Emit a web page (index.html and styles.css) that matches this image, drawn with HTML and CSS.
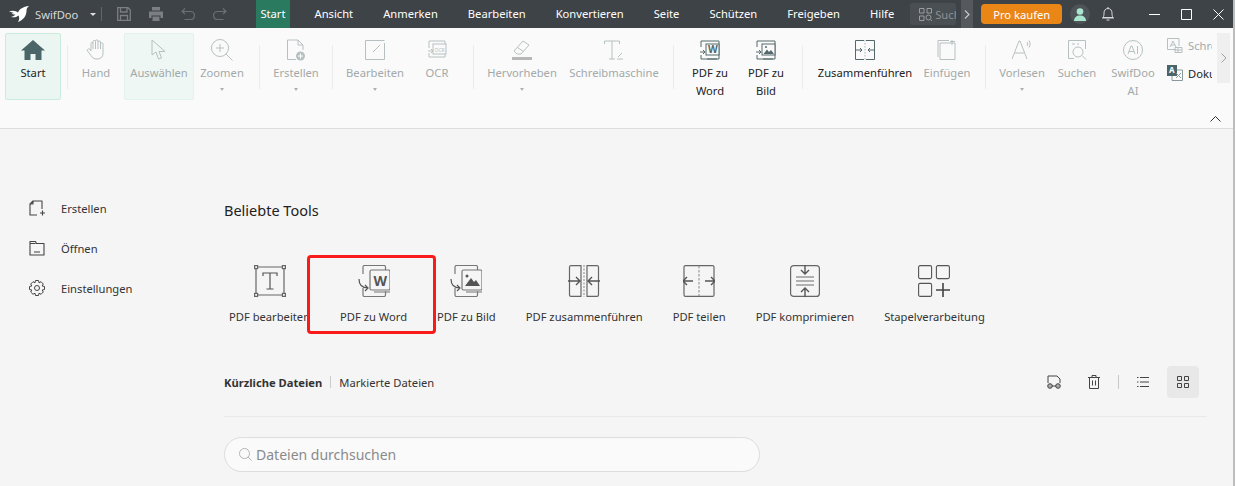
FILE: index.html
```html
<!DOCTYPE html>
<html lang="de">
<head>
    <meta charset="UTF-8">
    <title>SwifDoo PDF</title>
    <link rel="stylesheet" href="styles.css">
</head>
<body>
<div id="app">
    <div id="titlebar">
        <div class="logo">
            <svg width="22" height="16" viewBox="0 0 22 16"><path d="M0 5.500C4 4 7 5 9 6.500C10.500 3 14 .8 20 0C18 1.500 17.500 3 17.500 5C17.500 10 14 14 9 16C10.500 13.500 10.500 11 9.500 9.500C7 11.500 5 11.500 2 11C4 10.500 5.500 9.500 6.500 8.500C4.500 8.500 3 8 2.500 7.500L5 7C3.500 6.500 2 6 0 5.500Z" fill="#fff"/></svg>
            <span>SwifDoo</span>
        </div>
        <span class="caret-white"></span>
        <span class="title-sep"></span>
        <div class="quick">
            <svg width="14" height="14" viewBox="0 0 14 14" fill="none" stroke="#7b7f82" stroke-width="1.300"><path d="M.7.7H11L13.300 3V13.300H.7Z"/><path d="M3.500.7V5H10V.7M3.500 13.300V8.500H10.500V13.300"/></svg>
            <svg width="14" height="14" viewBox="0 0 14 14" fill="#7b7f82"><path d="M3 0H11V3.500H3ZM0 4.500H14V11H11.500V8.500H2.500V11H0ZM3.500 9.500H10.500V14H3.500Z"/></svg>
            <svg width="14" height="12" viewBox="0 0 14 12" fill="none" stroke="#6c7073" stroke-width="1.200"><path d="M4 .5 1 3.500 4 6M1 3.500H9.500C12 3.500 13.400 5.200 13.400 7.500S12 11.500 9.500 11.500H3.500"/></svg>
            <svg width="14" height="12" viewBox="0 0 14 12" fill="none" stroke="#6c7073" stroke-width="1.200"><path d="M10 .5 13 3.500 10 6M13 3.500H4.500C2 3.500 .6 5.200 .6 7.500S2 11.500 4.500 11.500H10.500"/></svg>
        </div>
        <div class="tabs">
            <span class="tab tab-on">Start</span>
            <span class="tab">Ansicht</span>
            <span class="tab">Anmerken</span>
            <span class="tab">Bearbeiten</span>
            <span class="tab">Konvertieren</span>
            <span class="tab">Seite</span>
            <span class="tab">Schützen</span>
            <span class="tab">Freigeben</span>
            <span class="tab">Hilfe</span>
        </div>
        <div class="title-search">
            <svg width="13" height="13" viewBox="0 0 13 13" fill="none" stroke="#9a9d9f" stroke-width="1"><path d="M.5.5H5V5H.5ZM8 .5H12.500V5H8ZM.5 8H5V12.500H.5Z"/><circle cx="9.500" cy="9.500" r="2.500"/><path d="M11.500 11.500 13 13"/></svg>
            <span>Suche</span>
        </div>
        <div class="title-more"><svg width="6" height="9" viewBox="0 0 6 9" fill="none" stroke="#c5c7c9" stroke-width="1.200"><path d="M1 .5 5 4.500 1 8.500"/></svg></div>
        <button class="buy">Pro kaufen</button>
        <div class="avatar"><svg width="12" height="13" viewBox="0 0 12 13" fill="#a8e6cf"><circle cx="6" cy="3.500" r="3.300"/><path d="M0 13C0 9.500 2.500 7.500 6 7.500S12 9.500 12 13Z"/></svg></div>
        <svg class="bell" width="12" height="14" viewBox="0 0 12 14" fill="none" stroke="#d8d9da" stroke-width="1"><path d="M1 10.500C2 9 2 7.500 2 6C2 3.500 3.500 1.500 6 1.500S10 3.500 10 6C10 7.500 10 9 11 10.500ZM0 11H12M4.500 13H7.500M6 0V1.500"/></svg>
        <div class="win">
            <svg width="11" height="11" viewBox="0 0 11 11" stroke="#fff" stroke-width="1"><path d="M0 5.500H11"/></svg>
            <svg width="11" height="11" viewBox="0 0 11 11" fill="none" stroke="#fff" stroke-width="1"><path d="M.5.500H10.500V10.500H.5Z"/></svg>
            <svg width="11" height="11" viewBox="0 0 11 11" stroke="#fff" stroke-width="1"><path d="M.5.500 10.500 10.500M10.500.5 .5 10.500"/></svg>
        </div>
    </div>

    <div id="ribbon">
        <div class="rb rb-start">
            <svg width="24" height="22" viewBox="0 0 24 22" fill="#4b6669"><path d="M12 1 24 11.500H20.500V21H14.500V15H9.500V21H3.500V11.500H0Z"/></svg>
            <span class="rb-on">Start</span>
        </div>
        <span class="rb-sep"></span>
        <div class="rb">
            <svg width="20" height="22" viewBox="0 0 20 22" fill="none" stroke="#b7c0c0" stroke-width="1"><path d="M5 12V4.500C5 3 7 3 7 4.500V2.500C7 1 9.500 1 9.500 2.500V2C9.500 .5 12 .5 12 2V3C12 1.500 14.500 1.500 14.500 3V4.500C14.500 3.500 17 3.500 17 5V14C17 18 15 20 11 20C8 20 6.500 19 5 16.500L1.500 12C.5 10.500 2.500 9 4 10.500ZM7 4.500V10M9.500 2.500V10M12 3V10M14.500 4.500V10"/></svg>
            <span>Hand</span>
        </div>
        <div class="rb rb-soft">
            <svg width="16" height="22" viewBox="0 0 16 22" fill="none" stroke="#b7c0c0" stroke-width="1"><path d="M1 1V16L5 13 7.500 20 10.500 19 8 12.500H14Z"/></svg>
            <span>Auswählen</span>
        </div>
        <div class="rb">
            <svg width="22" height="22" viewBox="0 0 22 22" fill="none" stroke="#b7c0c0" stroke-width="1"><circle cx="9" cy="9" r="8.500"/><path d="M15 15 21.500 21.500M5 9H13M9 5V13"/></svg>
            <span>Zoomen</span><i class="rb-caret"></i>
        </div>
        <span class="rb-sep"></span>
        <div class="rb">
            <svg width="20" height="22" viewBox="0 0 20 22" fill="none" stroke="#b7c0c0" stroke-width="1"><path d="M10 20.500H1.500V1H12L17 6V11M12 1V6H17"/><circle cx="14.500" cy="17" r="4.500" fill="#b7c0c0" stroke="none"/><path d="M14.500 14.500V19.500M12 17H17" stroke="#fff"/></svg>
            <span>Erstellen</span><i class="rb-caret"></i>
        </div>
        <span class="rb-sep"></span>
        <div class="rb">
            <svg width="20" height="20" viewBox="0 0 20 20" fill="none" stroke="#b7c0c0" stroke-width="1"><path d="M19.500 .5H.5V19.500H19.500V3M8 12 15 5"/></svg>
            <span>Bearbeiten</span><i class="rb-caret"></i>
        </div>
        <div class="rb">
            <svg width="20" height="20" viewBox="0 0 20 20" fill="none" stroke="#b7c0c0" stroke-width="1"><path d="M2 8V1H18V17H2V13M1 11 6 11M4 9 6 11 4 13"/><rect x="6" y="4" width="13" height="10" fill="#fafafa"/><text x="7.500" y="11.500" class="ocr-text">OCR</text></svg>
            <span>OCR</span>
        </div>
        <span class="rb-sep"></span>
        <div class="rb">
            <svg width="20" height="20" viewBox="0 0 20 20" fill="none" stroke="#b7c0c0" stroke-width="1"><path d="M2 11 11 1 17 5 9 14H5ZM5.500 7.500 11.500 11.500"/><path d="M0 17H20V20H0Z" fill="#b7b7b7" stroke="none"/></svg>
            <span>Hervorheben</span><i class="rb-caret"></i>
        </div>
        <div class="rb">
            <svg width="20" height="20" viewBox="0 0 20 20" fill="none" stroke="#b7c0c0" stroke-width="1"><path d="M.5 4V1H15.500V4M8 1V19M5 19H11M13 19H19M14 17 18 13"/></svg>
            <span>Schreibmaschine</span>
        </div>
        <span class="rb-sep"></span>
        <div class="rb">
            <svg width="20" height="20" viewBox="0 0 20 20" fill="none" stroke="#53686b" stroke-width="1"><path d="M1 7V1H19V19H1V15M0 12H5M3 10 5 12 3 14M7 19H17"/><rect x="6" y="4" width="13" height="11" fill="#fafafa"/><text x="8" y="13" class="mini-w">W</text></svg>
            <span class="rb-on">PDF zu<br>Word</span>
        </div>
        <div class="rb">
            <svg width="20" height="20" viewBox="0 0 20 20" fill="none" stroke="#53686b" stroke-width="1"><path d="M1 7V1H19V19H1V15M0 12H5M3 10 5 12 3 14M7 19H17"/><rect x="6" y="4" width="13" height="11" fill="#fafafa"/><path d="M7.500 14 11 9.500 13 12 15 10 18 14Z" fill="#53686b" stroke="none"/><circle cx="10" cy="7" r="1" fill="#53686b" stroke="none"/></svg>
            <span class="rb-on">PDF zu<br>Bild</span>
        </div>
        <span class="rb-sep"></span>
        <div class="rb">
            <svg width="20" height="20" viewBox="0 0 20 20" fill="none" stroke="#53686b" stroke-width="1"><path d="M9 .5H.5V19.500H9M11 .5H19.500V19.500H11M0 10H7M5 8 7 10 5 12M20 10H13M15 8 13 10 15 12"/><path d="M10 0V20" stroke="#aab4b4" stroke-dasharray="1.500 1.500"/></svg>
            <span class="rb-on">Zusammenführen</span>
        </div>
        <div class="rb">
            <svg width="20" height="20" viewBox="0 0 20 20" fill="none" stroke="#b7c0c0" stroke-width="1"><path d="M3 19.500V3H18V19.500ZM1 17V.5H12M15 0V5M13 1.500H18"/></svg>
            <span>Einfügen</span>
        </div>
        <span class="rb-sep"></span>
        <div class="rb">
            <svg width="20" height="20" viewBox="0 0 20 20" fill="none" stroke="#b7c0c0" stroke-width="1"><path d="M0 19 7 1H8L15 19M3 13H12M15 2C16 3 16 5 15 6M17 .5C18.500 2.500 18.500 5.500 17 7.500"/></svg>
            <span>Vorlesen</span><i class="rb-caret"></i>
        </div>
        <div class="rb">
            <svg width="20" height="20" viewBox="0 0 20 20" fill="none" stroke="#b7c0c0" stroke-width="1"><path d="M7 18.500H1.500V.5H18.500V9M5 4H8M10 4H12"/><circle cx="11" cy="12" r="5"/><path d="M15 15.500 19 19.500"/></svg>
            <span>Suchen</span>
        </div>
        <div class="rb">
            <svg width="20" height="20" viewBox="0 0 20 20" fill="none" stroke="#b7c0c0" stroke-width="1"><circle cx="10" cy="10" r="9.500"/><path d="M5 14 8 6H9L12 14M6 11.500H11M14.500 6V14"/></svg>
            <span>SwifDoo<br>AI</span>
        </div>
        <div class="rb-small">
            <div class="rb-line">
                <svg width="16" height="15" viewBox="0 0 16 15" fill="none" stroke="#b7c0c0" stroke-width="1"><path d="M9 11.500H.5V.5H12V8M3 9 6 3 9 9M4 7H8M11 9V15M8 12H15M8 9.500H15V14.500H8Z"/></svg>
                <span>Schreibtisch</span>
            </div>
            <div class="rb-line">
                <svg width="16" height="16" viewBox="0 0 16 16"><path d="M5 5H15.500V15.500H5Z" fill="none" stroke="#8a9a9c"/><path d="M0 0H10V11H0Z" fill="#49656a"/><path d="M9 8 14 13M14 8 9 13" stroke="#8a9a9c" fill="none"/><text x="2" y="8" class="mini-a">A</text></svg>
                <span class="rb-on">Dokument</span>
            </div>
        </div>
        <div class="rb-next"><svg width="6" height="10" viewBox="0 0 6 10" fill="none" stroke="#99a3a4" stroke-width="1"><path d="M.5.5 5 5 .5 9.500"/></svg></div>
        <svg class="rb-collapse" width="11" height="6" viewBox="0 0 11 6" fill="none" stroke="#333" stroke-width="1"><path d="M.5 5.500 5.500.5 10.500 5.500"/></svg>
    </div>

    <div id="content">
        <div class="side">
            <div class="side-item">
                <svg width="16" height="16" viewBox="0 0 16 16" fill="none" stroke="#444" stroke-width="1.100"><path d="M8 15H1V4L4 1H13V9M4 1V4H1M11 13H16M13.500 10.500V15.500" stroke-linejoin="round"/></svg>
                <span>Erstellen</span>
            </div>
            <div class="side-item">
                <svg width="16" height="16" viewBox="0 0 16 16" fill="none" stroke="#444" stroke-width="1.100"><path d="M1 15V1.500H6.500L7.500 3.500H15V15ZM6.500 3.500H1M5 12H11" stroke-linejoin="round"/></svg>
                <span>Öffnen</span>
            </div>
            <div class="side-item">
                <svg width="16" height="16" viewBox="0 0 16 16" fill="none" stroke="#444" stroke-width="1"><path d="M6.500.5H9.500L10 2.800 12 1.700 14.300 4 13.200 6 15.500 6.500V9.500L13.200 10 14.300 12 12 14.300 10 13.200 9.500 15.500H6.500L6 13.200 4 14.300 1.700 12 2.800 10 .5 9.500V6.500L2.800 6 1.700 4 4 1.700 6 2.800Z" stroke-linejoin="round"/><circle cx="8" cy="8" r="2.500"/></svg>
                <span>Einstellungen</span>
            </div>
        </div>

        <div class="main">
            <h2>Beliebte Tools</h2>
            <div class="tools">
                <div class="tool">
                    <svg width="32" height="32" viewBox="0 0 32 32" fill="none" stroke="#666" stroke-width="1.200"><path d="M2 2H30V30H2Z"/><g fill="#f5f5f5"><rect x=".6" y=".6" width="3" height="3"/><rect x="28.400" y=".6" width="3" height="3"/><rect x=".6" y="28.400" width="3" height="3"/><rect x="28.400" y="28.400" width="3" height="3"/></g><path d="M9 11V8H23V11M16 8V24M12.500 24H19.500" stroke="#555"/></svg>
                    <span>PDF bearbeiten</span>
                </div>
                <div class="tool tool-marked">
                    <svg width="32" height="32" viewBox="0 0 32 32" fill="none" stroke="#777" stroke-width="1.200"><path d="M5 9V2C5 1 5.500.5 6.500.5H26C27 .5 27.500 1 27.500 2V5M5 23V30C5 31 5.500 31.500 6.500 31.500H26C27 31.500 27.500 31 27.500 30V26"/><rect x="12" y="5" width="20" height="20" rx="1.500" fill="#f5f5f5"/><path d="M16 27H32" stroke="#888"/><path d="M1 14C1 20 4 23 10 23M7 20 10 23 7 26" stroke="#555"/><text x="15.500" y="21" class="tool-w">W</text></svg>
                    <span>PDF zu Word</span>
                    <div class="red-box"></div>
                </div>
                <div class="tool">
                    <svg width="32" height="32" viewBox="0 0 32 32" fill="none" stroke="#777" stroke-width="1.200"><path d="M5 9V2C5 1 5.500.5 6.500.5H26C27 .5 27.500 1 27.500 2V5M5 23V30C5 31 5.500 31.500 6.500 31.500H26C27 31.500 27.500 31 27.500 30V26"/><rect x="12" y="5" width="20" height="20" rx="1.500" fill="#f5f5f5"/><path d="M16 27H32" stroke="#888"/><path d="M1 14C1 20 4 23 10 23M7 20 10 23 7 26" stroke="#555"/><circle cx="17" cy="11" r="1.500" fill="#555" stroke="none"/><path d="M15 21 21 13 24 17 26 15 30 21Z" fill="#555" stroke="none"/></svg>
                    <span>PDF zu Bild</span>
                </div>
                <div class="tool">
                    <svg width="32" height="32" viewBox="0 0 32 32" fill="none" stroke="#666" stroke-width="1.200"><path d="M13 .6H3C2 .6 1.500 1 1.500 2V30C1.500 31 2 31.400 3 31.400H13V.6ZM19 .6H29C30 .6 30.500 1 30.500 2V30C30.500 31 30 31.400 29 31.400H19Z"/><path d="M16 0V32" stroke="#999" stroke-dasharray="2 1.500"/><path d="M0 16H12M8 12 12 16 8 20M32 16H20M24 12 20 16 24 20" stroke="#555" stroke-width="1.400"/></svg>
                    <span>PDF zusammenführen</span>
                </div>
                <div class="tool">
                    <svg width="32" height="32" viewBox="0 0 32 32" fill="none" stroke="#666" stroke-width="1.200"><rect x="1" y=".6" width="30" height="30.800" rx="1.500"/><path d="M16 1V31" stroke="#999" stroke-dasharray="2.500 1.500"/><path d="M0 16H10M4 12 0 16 4 20M32 16H22M28 12 32 16 28 20" stroke="#555" stroke-width="1.400"/></svg>
                    <span>PDF teilen</span>
                </div>
                <div class="tool">
                    <svg width="30" height="32" viewBox="0 0 30 32" fill="none" stroke="#666" stroke-width="1.200"><rect x=".6" y=".6" width="28.800" height="30.800" rx="3"/><path d="M6 12H24M6 16H24M6 20H24" stroke="#999" stroke-width="1.400"/><path d="M15 0V9M11 5 15 9 19 5M15 32V23M11 27 15 23 19 27" stroke="#555" stroke-width="1.400"/></svg>
                    <span>PDF komprimieren</span>
                </div>
                <div class="tool">
                    <svg width="32" height="32" viewBox="0 0 32 32" fill="none" stroke="#555" stroke-width="1.100"><rect x=".6" y=".6" width="13" height="13" rx="1.500"/><rect x="18.400" y=".6" width="13" height="13" rx="1.500"/><rect x=".6" y="18.400" width="13" height="13" rx="1.500"/><path d="M18 25H32M25 18V32" stroke="#444" stroke-width="1.600"/></svg>
                    <span>Stapelverarbeitung</span>
                </div>
            </div>

            <div class="files-bar">
                <span class="files-on">Kürzliche Dateien</span>
                <span class="files-sep"></span>
                <span>Markierte Dateien</span>
                <div class="files-actions">
                    <svg width="14" height="14" viewBox="0 0 14 14" fill="none" stroke="#444" stroke-width="1"><path d="M1 8V1H10L13 4V8"/><circle cx="3" cy="11" r="2.300" fill="#aaa"/><circle cx="11" cy="11" r="2.300" fill="#aaa"/><path d="M5 11H9"/></svg>
                    <svg width="12" height="14" viewBox="0 0 12 14" fill="none" stroke="#444" stroke-width="1"><path d="M0 2.500H12M4 2.500V.5H8V2.500M1.500 2.500V13.500H10.500V2.500M4.500 5.500V10.500M7.500 5.500V10.500"/></svg>
                    <span class="actions-sep"></span>
                    <svg class="act-list" width="12" height="10" viewBox="0 0 12 10" fill="none" stroke="#444" stroke-width="1"><path d="M3 .5H12M3 5H12M3 9.500H12M0 .5H1.500M0 5H1.500M0 9.500H1.500"/></svg>
                    <div class="act-grid"><svg width="12" height="12" viewBox="0 0 12 12" fill="none" stroke="#444" stroke-width="1"><path d="M.5.5H4.500V4.500H.5ZM7.500.5H11.500V4.500H7.500ZM.5 7.500H4.500V11.500H.5ZM7.500 7.500H11.500V11.500H7.500Z"/></svg></div>
                </div>
            </div>

            <div class="files-line"></div>

            <div class="file-search">
                <svg width="13" height="13" viewBox="0 0 13 13" fill="none" stroke="#b4b4b4" stroke-width="1"><circle cx="5.500" cy="5.500" r="5"/><path d="M9 9 12.500 12.500"/></svg>
                <span>Dateien durchsuchen</span>
            </div>
        </div>
    </div>
</div>
</body>
</html>
```
FILE: styles.css
```css
html, body {
    margin: 0;
    padding: 0;
}
body {
    width: 1236px;
    height: 486px;
    overflow: hidden;
    font-family: "Noto Sans", sans-serif;
    font-size: 11.2px;
    color: #333;
    background-color: #fff;
}
#app {
    width: 1235px;
    height: 486px;
    box-sizing: border-box;
    border-right: 2px solid #bdbdbd;
    background-color: #f5f5f5;
    display: flex;
    flex-direction: column;
}

/* titlebar */
#titlebar {
    height: 28px;
    flex: none;
    background-color: #3e4347;
    color: #fff;
    display: flex;
    align-items: center;
}
.logo {
    display: flex;
    align-items: center;
    gap: 4px;
    margin-left: 9px;
    color: #d8d9da;
}
.caret-white {
    margin-left: 12px;
    border: 3px solid transparent;
    border-top: 3px solid #e0e0e0;
    margin-top: 3px;
}
.title-sep {
    width: 1px;
    height: 14px;
    background-color: #666;
    margin-left: 5px;
}
.quick {
    display: flex;
    align-items: center;
    gap: 18px;
    margin-left: 15px;
}
.tabs {
    display: flex;
    gap: 20px;
    margin-left: 27px;
    height: 28px;
    align-items: center;
}
.tab {
    padding: 0 5px;
    line-height: 28px;
}
.tab-on {
    margin-left: 2px;
    padding: 0 4px;
    background-color: #2a7a60;
}
.title-search {
    margin-left: 11px;
    width: 46px;
    height: 22px;
    background-color: #4a4f53;
    border-radius: 2px;
    color: #8e9294;
    display: flex;
    align-items: center;
    gap: 3px;
    padding-left: 9px;
    box-sizing: border-box;
    overflow: hidden;
    white-space: nowrap;
}
.title-search svg {
    flex: none;
}
.title-more {
    margin-left: 5px;
    width: 12px;
    height: 28px;
    background-color: #55595c;
    display: flex;
    align-items: center;
    justify-content: center;
}
.buy {
    margin-left: 8px;
    width: 81px;
    height: 20px;
    border: none;
    padding: 0;
    border-radius: 4px;
    background-color: #e98616;
    color: #fff;
    font-family: inherit;
    font-size: 11.2px;
}
.avatar {
    margin-left: 8px;
    width: 20px;
    height: 20px;
    border-radius: 50%;
    background-color: #4e5357;
    display: flex;
    align-items: center;
    justify-content: center;
}
.bell {
    margin-left: 12px;
}
.win {
    margin-left: 35px;
    display: flex;
    gap: 21px;
}

/* ribbon */
#ribbon {
    height: 101px;
    flex: none;
    box-sizing: border-box;
    padding: 5px 0 0 5px;
    background-color: #fafafa;
    border-bottom: 1px solid #ddd;
    position: relative;
    display: grid;
    grid-template-columns: 56px 7px 56px 70px 56px 10px 72px 1px 84px 40px 17px 96px 88px 16px 72px 40px 17px 124px 40px 19px 72px 38px 74px 45px;
    align-items: start;
    color: #a3a9a9;
}
.rb {
    height: 67px;
    box-sizing: border-box;
    padding-top: 5px;
    display: flex;
    flex-direction: column;
    align-items: center;
    white-space: nowrap;
    text-align: center;
    line-height: 18px;
    border: 1px solid transparent;
    border-radius: 2px;
}
.rb svg {
    height: 22px;
    flex: none;
    margin-bottom: 3px;
}
.rb-start {
    background-color: #ebf6f2;
    border-color: #c9ecdd;
}
.rb-soft {
    background-color: #eef7f3;
    border-color: #e3f3ec;
}
.rb-on {
    color: #222;
}
.rb-sep {
    justify-self: end;
    width: 1px;
    height: 44px;
    margin-top: 12px;
    background-color: #ececec;
}
.rb-caret {
    width: 0;
    margin-top: 6px;
    border: 2.5px solid transparent;
    border-top: 3px solid #b0b0b0;
}
.rb-small {
    margin-left: -3px;
    width: 45px;
    overflow: hidden;
    white-space: nowrap;
    padding-top: 4px;
    display: flex;
    flex-direction: column;
    gap: 12px;
}
.rb-line {
    display: flex;
    align-items: center;
    gap: 5px;
    height: 16px;
}
.rb-line svg {
    flex: none;
}
.rb-next {
    position: absolute;
    left: 1217px;
    top: 5px;
    width: 13px;
    height: 50px;
    background-color: #efefef;
    display: flex;
    align-items: center;
    justify-content: center;
}
.rb-collapse {
    position: absolute;
    left: 1210px;
    top: 88px;
}
.ocr-text {
    font-size: 5px;
    fill: #b7c0c0;
    stroke: none;
}
.mini-w {
    font-size: 10px;
    font-weight: bold;
    fill: #53686b;
    stroke: none;
}
.mini-a {
    font-size: 8px;
    font-weight: bold;
    fill: #fff;
}

/* page content */
#content {
    flex: 1;
    display: flex;
    min-height: 0;
}
.side {
    width: 224px;
    flex: none;
    padding: 69px 0 0 29px;
    box-sizing: border-box;
    display: flex;
    flex-direction: column;
    gap: 20px;
}
.side-item {
    display: flex;
    align-items: center;
    gap: 16px;
    height: 20px;
}
.main {
    width: 983px;
    flex: none;
    padding-top: 71px;
}
h2 {
    margin: 0;
    font-size: 14.5px;
    font-weight: 400;
    line-height: 20px;
    color: #222;
}
.tools {
    display: flex;
    gap: 30px;
    margin-top: 45px;
    padding-left: 5px;
}
.tool {
    position: relative;
    display: flex;
    flex-direction: column;
    align-items: center;
    gap: 11px;
    white-space: nowrap;
    line-height: 17px;
}
.tool-w {
    font-size: 14px;
    font-weight: bold;
    fill: #555;
    stroke: none;
}
.red-box {
    position: absolute;
    left: -33px;
    right: -29px;
    top: -10px;
    bottom: -9px;
    border: 3px solid #fb1a1a;
    border-radius: 4px;
}
.files-bar {
    display: flex;
    align-items: center;
    margin-top: 41px;
    height: 32px;
}
.files-on {
    font-weight: 700;
}
.files-sep {
    width: 1px;
    height: 12px;
    background-color: #ccc;
    margin: 0 8px;
}
.files-actions {
    margin-left: auto;
    margin-right: 8px;
    display: flex;
    align-items: center;
}
.files-actions svg + svg {
    margin-left: 27px;
}
.actions-sep {
    width: 1px;
    height: 14px;
    background-color: #c8c8c8;
    margin: 0 18px;
}
.act-grid {
    margin-left: 18px;
    width: 32px;
    height: 32px;
    border-radius: 4px;
    background-color: #e8e8e8;
    display: flex;
    align-items: center;
    justify-content: center;
}
.files-line {
    margin-top: 18px;
    height: 1px;
    background-color: #e9e9e9;
}
.file-search {
    margin-top: 20px;
    width: 536px;
    height: 35px;
    box-sizing: border-box;
    background-color: #fafafa;
    border: 1px solid #ddd;
    border-radius: 18px;
    display: flex;
    align-items: center;
    gap: 4px;
    padding-left: 14px;
    font-size: 14px;
    color: #8a8a8a;
}
```
